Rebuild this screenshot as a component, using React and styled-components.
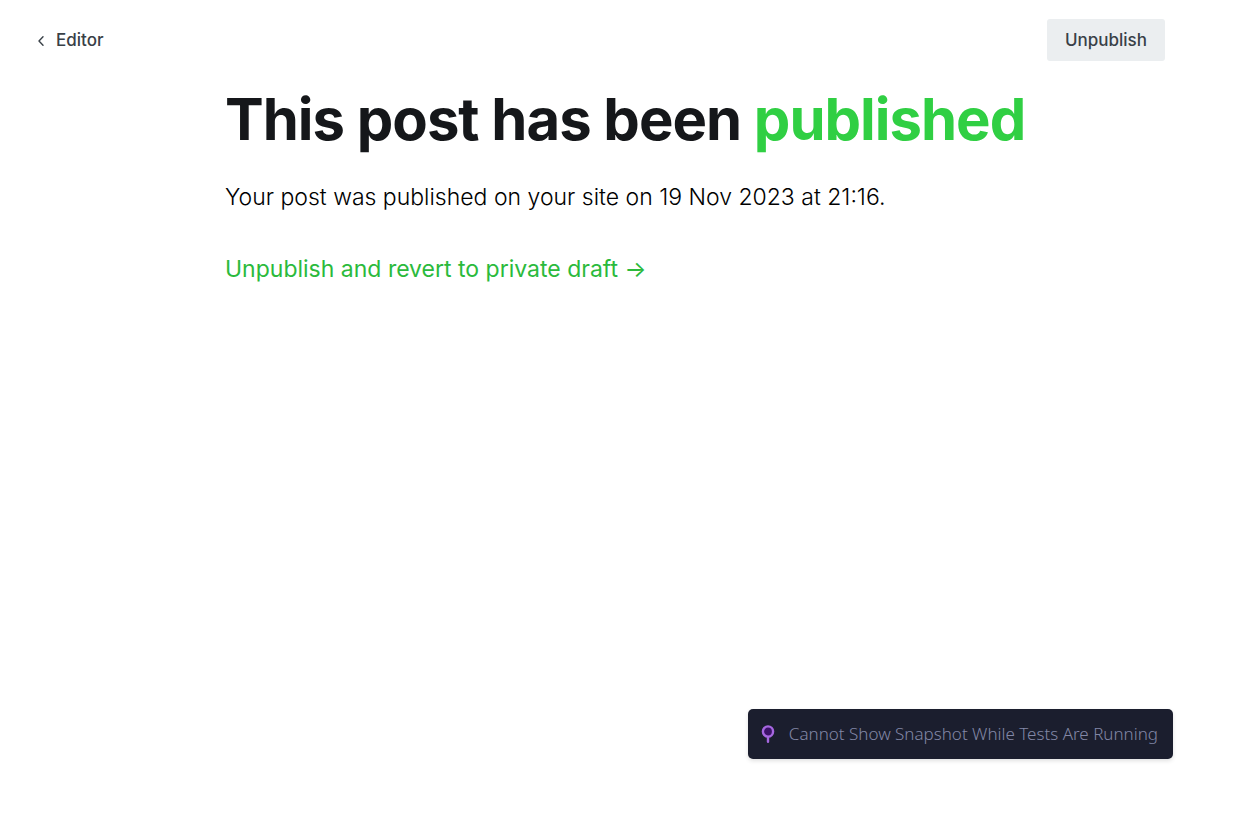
import React from "react";
import styled, { createGlobalStyle } from "styled-components";

const GlobalStyle = createGlobalStyle`
  *, *::before, *::after { box-sizing: border-box; }
  body {
    margin: 0;
    background: #fff;
    color: #15171a;
    font-family: Inter, "Liberation Sans", sans-serif;
  }
`;

const Page = styled.div`
  display: flex;
  flex-direction: column;
  min-height: 100vh;
`;

const Header = styled.header`
  display: flex;
  align-items: center;
  justify-content: space-between;
  padding: 19px 85px 0 36px;
`;

const BackButton = styled.button`
  display: flex;
  align-items: center;
  gap: 10px;
  padding: 0;
  border: 0;
  background: none;
  color: #394047;
  font: 500 17px/24px Inter, sans-serif;
  cursor: pointer;
`;

const UnpublishButton = styled.button`
  height: 42px;
  padding: 0 18px;
  border: 0;
  border-radius: 3px;
  background: #ebeef0;
  color: #394047;
  font: 500 17px/24px Inter, sans-serif;
  cursor: pointer;
`;

const Main = styled.main`
  flex: 1;
  width: 100%;
  max-width: 850px;
  margin: 0 auto;
  padding: 24px 0 0 25px;
`;

const Title = styled.h1`
  margin: 0;
  font-size: 58px;
  font-weight: 700;
  line-height: 68px;
  letter-spacing: -1px;
`;

const Accent = styled.span`
  color: #30cf43;
`;

const Message = styled.p`
  margin: 26px 0 0;
  color: #000;
  font-size: 23px;
  font-weight: 300;
  line-height: 36px;
`;

const RevertButton = styled.button`
  margin: 36px 0 0;
  padding: 0;
  border: 0;
  background: none;
  color: #2bba3c;
  font: 400 23px/36px Inter, sans-serif;
  cursor: pointer;
`;

const ToastArea = styled.footer`
  display: flex;
  justify-content: flex-end;
  padding: 0 77px 66px;
`;

const Toast = styled.div`
  display: flex;
  align-items: center;
  gap: 14px;
  height: 50px;
  padding: 0 15px 0 13px;
  border-radius: 5px;
  background: #1b1e2e;
  box-shadow: 0 2px 4px rgba(0, 0, 0, 0.12);
  color: #8287a6;
  font: 300 17px/24px "Noto Sans", "Open Sans", sans-serif;
`;

export default function App() {
  return (
    <Page>
      <GlobalStyle />
      <Header>
        <BackButton type="button">
          <svg width="10" height="12" viewBox="0 0 10 12" fill="none" aria-hidden="true">
            <path d="M7 2.8 3 7l4 4.2" stroke="currentColor" strokeWidth="1.4" strokeLinecap="round" strokeLinejoin="round" />
          </svg>
          Editor
        </BackButton>
        <UnpublishButton type="button">Unpublish</UnpublishButton>
      </Header>
      <Main>
        <Title>
          This post has been <Accent>published</Accent>
        </Title>
        <Message>Your post was published on your site on 19 Nov 2023 at 21:16.</Message>
        <RevertButton type="button">Unpublish and revert to private draft →</RevertButton>
      </Main>
      <ToastArea>
        <Toast role="status">
          <svg width="14" height="18" viewBox="0 0 14 18" fill="none" aria-hidden="true">
            <path d="M7 12v4.8" stroke="#a667e0" strokeWidth="2.4" strokeLinecap="round" />
            <circle cx="7" cy="6.5" r="5.1" fill="#3c1268" stroke="#a667e0" strokeWidth="2.4" />
          </svg>
          Cannot Show Snapshot While Tests Are Running
        </Toast>
      </ToastArea>
    </Page>
  );
}
